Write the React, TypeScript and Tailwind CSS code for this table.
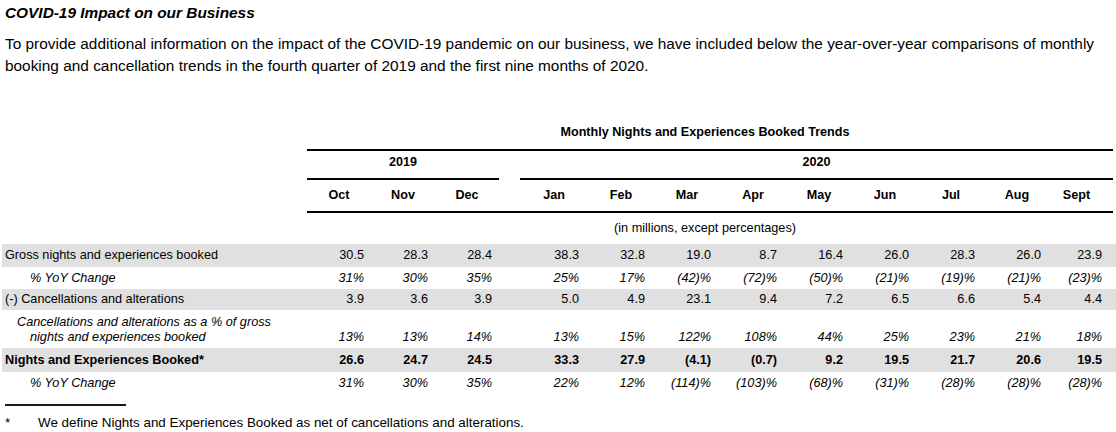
import React from 'react';

type Row = {
  label: string;
  label2?: string;
  values: string[];
  kind: 'gross' | 'pct' | 'cancel' | 'cancelPct' | 'net';
};

const months2019 = ['Oct', 'Nov', 'Dec'];
const months2020 = ['Jan', 'Feb', 'Mar', 'Apr', 'May', 'Jun', 'Jul', 'Aug', 'Sept'];

const rows: Row[] = [
  {
    label: 'Gross nights and experiences booked',
    kind: 'gross',
    values: ['30.5', '28.3', '28.4', '38.3', '32.8', '19.0', '8.7', '16.4', '26.0', '28.3', '26.0', '23.9'],
  },
  {
    label: '% YoY Change',
    kind: 'pct',
    values: ['31%', '30%', '35%', '25%', '17%', '(42)%', '(72)%', '(50)%', '(21)%', '(19)%', '(21)%', '(23)%'],
  },
  {
    label: '(-) Cancellations and alterations',
    kind: 'cancel',
    values: ['3.9', '3.6', '3.9', '5.0', '4.9', '23.1', '9.4', '7.2', '6.5', '6.6', '5.4', '4.4'],
  },
  {
    label: 'Cancellations and alterations as a % of gross',
    label2: 'nights and experiences booked',
    kind: 'cancelPct',
    values: ['13%', '13%', '14%', '13%', '15%', '122%', '108%', '44%', '25%', '23%', '21%', '18%'],
  },
  {
    label: 'Nights and Experiences Booked*',
    kind: 'net',
    values: ['26.6', '24.7', '24.5', '33.3', '27.9', '(4.1)', '(0.7)', '9.2', '19.5', '21.7', '20.6', '19.5'],
  },
  {
    label: '% YoY Change',
    kind: 'pct',
    values: ['31%', '30%', '35%', '22%', '12%', '(114)%', '(103)%', '(68)%', '(31)%', '(28)%', '(28)%', '(28)%'],
  },
];

const gridCols =
  'grid grid-cols-[305px_64px_64px_64px_21px_68px_66px_66px_66px_66px_66px_66px_66px_63px]';

function DataRow({ row }: { row: Row }) {
  const shaded = row.kind === 'gross' || row.kind === 'cancel' || row.kind === 'net';
  const italic = row.kind === 'pct' || row.kind === 'cancelPct';
  const bold = row.kind === 'net';
  const height =
    row.kind === 'gross'
      ? 'h-[23px]'
      : row.kind === 'cancel'
      ? 'h-[21px]'
      : row.kind === 'cancelPct'
      ? 'h-[38px]'
      : row.kind === 'net'
      ? 'h-[24px]'
      : 'h-[22px]';

  const first = row.values.slice(0, 3);
  const second = row.values.slice(3);

  return (
    <div
      className={`${gridCols} ${height} ${shaded ? 'bg-[#e0e0e0]' : ''} ${italic ? 'italic' : ''} ${
        bold ? 'font-bold' : ''
      } text-[12.7px] leading-[15px]`}
    >
      {row.kind === 'cancelPct' ? (
        <div className="flex flex-col justify-end pb-[3px] pl-[15px]">
          <span>{row.label}</span>
          <span className="pl-[13px]">{row.label2}</span>
        </div>
      ) : (
        <div className={`flex items-center ${row.kind === 'pct' ? 'pl-[28px]' : 'pl-[3px]'}`}>
          {row.label}
        </div>
      )}
      {first.map((v, i) => (
        <div
          key={`a${i}`}
          className={`flex justify-end pr-[7px] ${row.kind === 'cancelPct' ? 'items-end pb-[3px]' : 'items-center'}`}
        >
          {v}
        </div>
      ))}
      <div />
      {second.map((v, i) => (
        <div
          key={`b${i}`}
          className={`flex justify-end ${i === 8 ? 'pr-[11px]' : 'pr-[9px]'} ${
            row.kind === 'cancelPct' ? 'items-end pb-[3px]' : 'items-center'
          }`}
        >
          {v}
        </div>
      ))}
    </div>
  );
}

export default function App() {
  return (
    <div className="w-[1116px] h-[432px] overflow-hidden bg-white text-black font-['Liberation_Sans',Arial,sans-serif]">
      <div className="pl-[5px] pt-[4px]">
        <h2 className="text-[15.4px] leading-[18px] font-bold italic">COVID-19 Impact on our Business</h2>
        <p className="mt-[11px] text-[15.4px] leading-[22px] pr-[10px]">
          To provide additional information on the impact of the COVID-19 pandemic on our business, we have included
          below the year-over-year comparisons of monthly booking and cancellation trends in the fourth quarter of 2019
          and the first nine months of 2020.
        </p>
      </div>

      <div className="ml-[2px] mt-[47px]">
        {/* table heading */}
        <div className={`${gridCols} text-[12.6px] font-bold`}>
          <div />
          <div className="col-span-13 border-b-2 border-black text-center leading-[16px] pb-[9px] pr-[10px]">
            Monthly Nights and Experiences Booked Trends
          </div>
        </div>
        {/* years */}
        <div className={`${gridCols} text-[12.6px] font-bold`}>
          <div />
          <div className="col-span-3 border-b-2 border-black text-center leading-[16px] pt-[3px] pb-[8px]">2019</div>
          <div />
          <div className="col-span-9 border-b-2 border-black text-center leading-[16px] pt-[3px] pb-[8px]">2020</div>
        </div>
        {/* months */}
        <div className={`${gridCols} text-[12.6px] font-bold`}>
          <div />
          {months2019.map((m) => (
            <div key={m} className="border-b-2 border-black text-center leading-[16px] pt-[7px] pb-[8px]">
              {m}
            </div>
          ))}
          <div className="border-b-2 border-black" />
          {months2020.map((m) => (
            <div
              key={m}
              className={`border-b-2 border-black text-center leading-[16px] pt-[7px] pb-[8px] ${
                m === 'Sept' ? 'pr-[10px]' : ''
              }`}
            >
              {m}
            </div>
          ))}
        </div>
        <div className={`${gridCols} text-[12.7px]`}>
          <div />
          <div className="col-span-13 text-center leading-[15px] pt-[8px] pb-[8px] pr-[10px]">
            (in millions, except percentages)
          </div>
        </div>

        {rows.map((r, i) => (
          <DataRow key={i} row={r} />
        ))}
      </div>

      <div className="pl-[5px] mt-[10px]">
        <div className="w-[121px] h-[2px] bg-[#1a1a1a]" />
        <div className="flex text-[13.4px] leading-[15px] mt-[9px]">
          <span className="w-[33px]">*</span>
          <span>We define Nights and Experiences Booked as net of cancellations and alterations.</span>
        </div>
      </div>
    </div>
  );
}
